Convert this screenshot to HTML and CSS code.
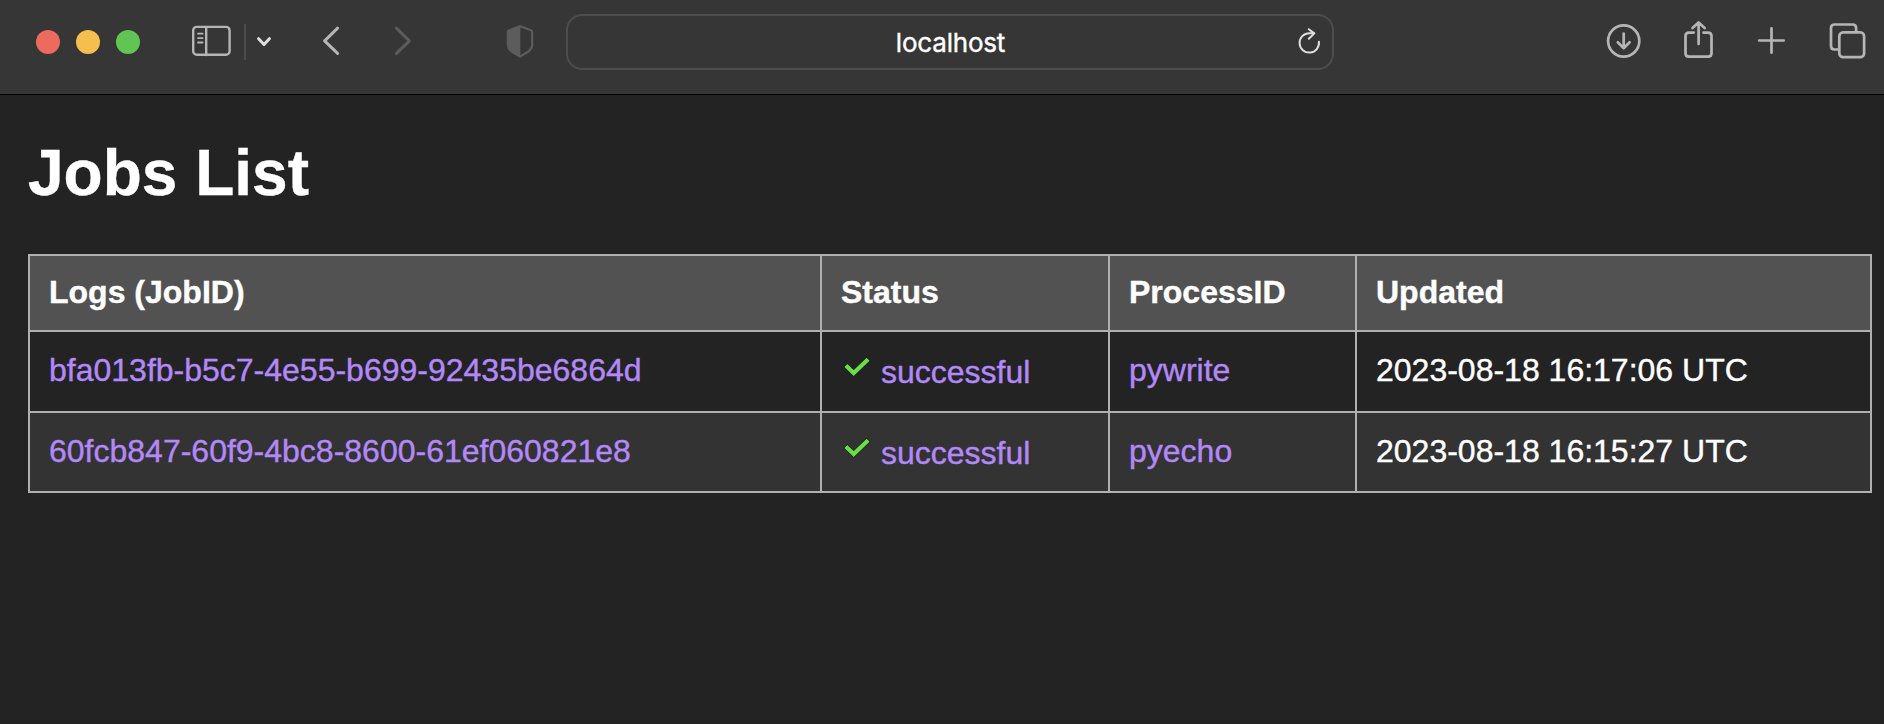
FILE: index.html
```html
<!DOCTYPE html>
<html lang="en">
<head>
<meta charset="utf-8">
<title>Jobs List</title>
<link rel="stylesheet" href="styles.css">
</head>
<body>
<header class="toolbar">
  <div class="lights"><span class="light red"></span><span class="light yellow"></span><span class="light green"></span></div>
  <svg class="icon sidebar" width="40" height="32" viewBox="0 0 40 32"><rect x="2.200" y="1.900" width="36.400" height="27.900" rx="3.600"/><path d="M15.200 2v28"/><path class="thin" d="M7 8.700h4.600M7 13.100h4.600M7 17.500h4.600"/></svg>
  <span class="divider"></span>
  <svg class="icon chevron" width="16" height="12" viewBox="0 0 16 12"><path d="M2.600 2.700 8 8.600 13.400 2.700"/></svg>
  <svg class="icon back" width="18" height="30" viewBox="0 0 18 30"><path d="M15.600 2.200 2.600 14.800 15.600 27.400"/></svg>
  <svg class="icon forward" width="18" height="30" viewBox="0 0 18 30"><path d="M2.400 2.200 15.400 14.800 2.400 27.400"/></svg>
  <svg class="icon shield" width="28" height="34" viewBox="0 0 28 34"><path d="M14 2.200 25 6.200Q26.200 6.700 26.200 8V20Q26.200 24.800 22 27.800L14 32.600 6 27.800Q1.800 24.800 1.800 20V8Q1.800 6.700 3 6.200Z"/><path class="fill" d="M14.300 2.200V32.600L6 27.800Q1.800 24.800 1.800 20V8Q1.800 6.700 3 6.200Z"/></svg>
  <div class="address">
    <span class="host">localhost</span>
    <svg class="icon reload" width="24" height="28" viewBox="0 0 24 28"><path d="M20.900 13.700A9.700 9.700 0 1 1 11.300 5.200L16 5.300"/><path d="M10.800 1.200 16.300 5.400 10.800 10.800"/></svg>
  </div>
  <svg class="icon download" width="36" height="36" viewBox="0 0 36 36"><circle cx="17.700" cy="18" r="15.600"/><path d="M17.700 10.500V25.200M11.800 19.300 17.700 25.200 23.600 19.300"/></svg>
  <svg class="icon share" width="32" height="40" viewBox="0 0 32 40"><path d="M10.700 12.600H6Q2.500 12.600 2.500 16.100V33.200Q2.500 36.700 6 36.700H25Q28.500 36.700 28.500 33.200V16.100Q28.500 12.600 25 12.600H20.500"/><path d="M15.600 24V2.500M9.500 8 15.600 2.500 21.700 8"/></svg>
  <svg class="icon plus" width="30" height="30" viewBox="0 0 30 30"><path d="M15.500 2.300V26.700M3.200 14.500H27.700"/></svg>
  <svg class="icon tabs" width="38" height="38" viewBox="0 0 38 38"><path d="M10.900 27.500H6.500Q3 27.500 3 24V6Q3 2.500 6.500 2.500H24.600Q28.100 2.500 28.100 6V10"/><rect x="11.300" y="10.400" width="24.800" height="24.800" rx="3.800"/></svg>
</header>
<main class="page">
  <h1 class="title">Jobs List</h1>
  <table class="jobs">
    <colgroup><col class="col-id"><col class="col-status"><col class="col-process"><col></colgroup>
    <thead>
      <tr><th>Logs (JobID)</th><th>Status</th><th>ProcessID</th><th>Updated</th></tr>
    </thead>
    <tbody>
      <tr>
        <td><a>bfa013fb-b5c7-4e55-b699-92435be6864d</a></td>
        <td><a class="status"><svg class="check" width="32" height="28" viewBox="0 0 32 28"><path class="edge" d="M6.400 13 12.700 19.100 25.600 6.600"/><path d="M6.400 13 12.700 19.100 25.600 6.600"/></svg>successful</a></td>
        <td><a>pywrite</a></td>
        <td>2023-08-18 16:17:06 UTC</td>
      </tr>
      <tr class="alt">
        <td><a>60fcb847-60f9-4bc8-8600-61ef060821e8</a></td>
        <td><a class="status"><svg class="check" width="32" height="28" viewBox="0 0 32 28"><path class="edge" d="M6.400 13 12.700 19.100 25.600 6.600"/><path d="M6.400 13 12.700 19.100 25.600 6.600"/></svg>successful</a></td>
        <td><a>pyecho</a></td>
        <td>2023-08-18 16:15:27 UTC</td>
      </tr>
    </tbody>
  </table>
</main>
</body>
</html>
```
FILE: styles.css
```css
* { box-sizing: border-box; }
body {
  margin: 0;
  min-height: 724px;
  background: #232323;
  color: #fff;
  font: 32px/36px "Liberation Sans", Arial, sans-serif;
  -webkit-text-stroke: 0.4px;
}
.toolbar {
  display: flex;
  align-items: flex-start;
  height: 95px;
  background: #363636;
  border-bottom: 1px solid #000;
}
.lights { display: flex; gap: 16px; margin: 30px 0 0 36px; }
.light { width: 24px; height: 24px; border-radius: 50%; }
.red { background: #ed6a5e; }
.yellow { background: #f5bf4f; }
.green { background: #61c554; }
.icon {
  flex: none;
  fill: none;
  stroke: #b5b5b5;
  stroke-width: 2.7;
  stroke-linecap: round;
  stroke-linejoin: round;
}
.icon .thin { stroke-width: 1.8; }
.icon .fill { fill: #5c5c5c; stroke: none; }
.sidebar { margin: 25px 0 0 51px; stroke-width: 2.4; }
.divider { width: 2px; height: 36px; margin: 24px 0 0 13px; background: #4a4a4a; }
.chevron { margin: 36px 0 0 10px; stroke: #dedede; stroke-width: 3; }
.back { margin: 26px 0 0 50px; stroke-width: 3; }
.forward { margin: 26px 0 0 54px; stroke: #5c5c5c; stroke-width: 3; }
.shield { margin: 24px 0 0 94px; stroke: #5c5c5c; stroke-width: 2.2; }
.address {
  display: flex;
  align-items: center;
  width: 768px;
  height: 56px;
  margin: 14px 0 0 32px;
  padding: 0 10px 0 35px;
  border: 2px solid #4d4d4d;
  border-radius: 16px;
}
.host {
  flex: 1;
  padding-top: 2px;
  text-align: center;
  font: 26px/32px Inter, Roboto, sans-serif;
  letter-spacing: -0.2px;
}
.reload { stroke: #dedede; stroke-width: 2; }
.download { margin: 23px 0 0 272px; }
.share { margin: 20px 0 0 41px; }
.plus { margin: 26px 0 0 41px; }
.tabs { margin: 22px 0 0 42px; }
.page { padding: 41px 12px 0 28px; }
.title { margin: 0; height: 118px; font-size: 64px; line-height: 74px; }
.jobs {
  width: 1844px;
  border-collapse: collapse;
  table-layout: fixed;
}
.col-id { width: 792px; }
.col-status { width: 288px; }
.col-process { width: 247px; }
.jobs th, .jobs td {
  border: 2px solid #b0b0b0;
  padding: 0 19px;
  text-align: left;
  vertical-align: top;
}
.jobs th { height: 76px; padding-top: 18px; background: #525252; }
.jobs td { height: 81px; padding-top: 20px; }
.jobs .alt { background: #333; }
.jobs .alt td { height: 80px; }
.jobs a { color: #b388f8; }
.jobs .status { display: flex; align-items: flex-start; gap: 8px; padding-top: 2px; }
.check { fill: none; stroke: #68e045; stroke-width: 4.2; stroke-linecap: square; }
.check .edge { stroke: #151b13; stroke-width: 5.4; }
```
